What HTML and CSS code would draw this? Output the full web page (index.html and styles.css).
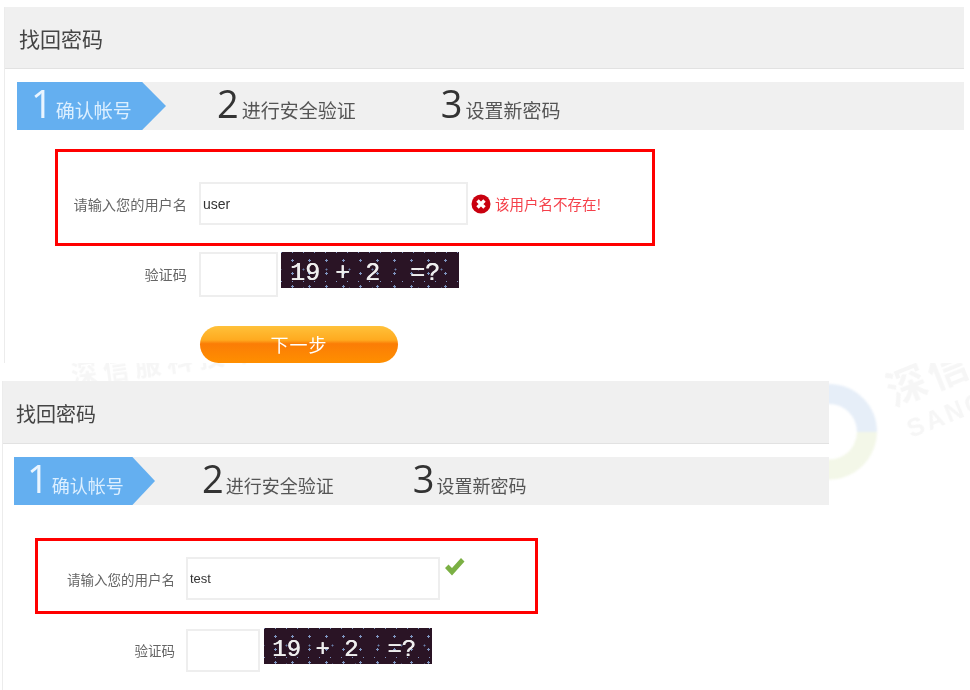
FILE: index.html
```html
<!DOCTYPE html>
<html lang="zh-CN">
<head>
    <meta charset="UTF-8">
    <title>找回密码</title>
    <link rel="stylesheet" href="styles.css">
</head>
<body>
    <!-- faint watermark behind the two pasted shots -->
    <div class="mark mark-top">深信服科技中心</div>
    <svg class="mark-logo" width="100" height="100" viewBox="0 0 100 100">
        <path d="M12 50a38 38 0 0 1 76 0" fill="none" stroke="#e6eef8" stroke-width="20"/>
        <path d="M88 50a38 38 0 0 1-54 34" fill="none" stroke="#f3f7e8" stroke-width="20"/>
    </svg>
    <div class="mark mark-cn">深信</div>
    <div class="mark mark-en">SANG</div>

    <div class="panel panel-a">
        <div class="panel-head">找回密码</div>
        <div class="steps">
            <div class="step step-on"><span class="num">1</span><span>确认帐号</span></div>
            <div class="step step-two"><span class="num">2</span><span>进行安全验证</span></div>
            <div class="step"><span class="num">3</span><span>设置新密码</span></div>
        </div>
        <div class="redbox">
            <div class="row">
                <label class="label">请输入您的用户名</label>
                <div class="input input-wide">user</div>
                <svg class="icon-err" width="20" height="20" viewBox="0 0 20 20">
                    <circle cx="10" cy="10" r="9.5" fill="#c9000f"/>
                    <path d="M6.5 6.5l7 7M13.5 6.5l-7 7" stroke="#fff" stroke-width="3.4"/>
                </svg>
                <span class="err">该用户名不存在!</span>
            </div>
        </div>
        <div class="row row-code">
            <label class="label">验证码</label>
            <div class="input input-code"></div>
            <div class="captcha">19 + 2&nbsp; =?</div>
        </div>
        <div class="btn">下一步</div>
    </div>

    <div class="panel panel-b">
        <div class="panel-head">找回密码</div>
        <div class="steps">
            <div class="step step-on"><span class="num">1</span><span>确认帐号</span></div>
            <div class="step step-two"><span class="num">2</span><span>进行安全验证</span></div>
            <div class="step"><span class="num">3</span><span>设置新密码</span></div>
        </div>
        <div class="redbox">
            <div class="row">
                <label class="label">请输入您的用户名</label>
                <div class="input input-wide">test</div>
                <svg class="icon-ok" width="21" height="20" viewBox="0 0 21 20">
                    <path d="M1 11l3.500-3.500 3.500 3.500L17 1l3.500 3.500L8 18.500z" fill="#7bb044"/>
                </svg>
            </div>
        </div>
        <div class="row row-code">
            <label class="label">验证码</label>
            <div class="input input-code"></div>
            <div class="captcha">19 + 2&nbsp; =?</div>
        </div>
    </div>
</body>
</html>
```

FILE: styles.css
```css
* {
    margin: 0;
    padding: 0;
    box-sizing: border-box;
}

body {
    position: relative;
    height: 690px;
    overflow: hidden;
    background: #fff;
    font-family: "Noto Sans CJK SC", "Liberation Sans", sans-serif;
    color: #555;
}

/* watermark */
.mark {
    position: absolute;
    font-weight: 700;
    color: #f6f6f6;
    white-space: nowrap;
    transform: rotate(-22deg);
    filter: blur(0.6px);
}

.mark-top {
    left: 70px;
    top: 340px;
    font-size: 26px;
    letter-spacing: 6px;
    transform: rotate(-8deg);
}

.mark-cn {
    left: 884px;
    top: 345px;
    font-size: 40px;
    letter-spacing: 4px;
}

.mark-en {
    left: 905px;
    top: 400px;
    font-size: 25px;
    letter-spacing: 3px;
    font-family: "Liberation Sans", sans-serif;
}

.mark-logo {
    position: absolute;
    left: 779px;
    top: 382px;
    filter: blur(1px);
}

/* panels */
.panel {
    position: relative;
    overflow: hidden;
    border-left: 1px solid #ececec;
    background: #fff;
    filter: blur(0.6px);
}

.panel-a {
    width: 960px;
    height: 356px;
    margin: 7px 0 0 4px;
}

.panel-b {
    width: 827px;
    height: 309px;
    margin: 18px 0 0 2px;
}

.panel-head {
    display: flex;
    align-items: center;
    height: 62px;
    background: #f0f0f0;
    border-bottom: 1px solid #e2e2e2;
    color: #444;
}

.panel-a .panel-head {
    padding-left: 14px;
    font-size: 21px;
}

.panel-b .panel-head {
    height: 63px;
    padding: 2px 0 0 13px;
    font-size: 20px;
}

/* steps */
.steps {
    display: flex;
    height: 48px;
    margin-top: 13px;
    background: #f0f0f0;
    color: #555;
}

.panel-a .steps {
    margin-left: 12px;
    font-size: 19px;
}

.panel-b .steps {
    margin-left: 11px;
    font-size: 18px;
}

.step {
    display: flex;
    align-items: baseline;
    line-height: 42px;
}

.step-on {
    color: #dcefff;
    background: #64aff0;
    clip-path: polygon(0 0, 84% 0, 100% 50%, 84% 100%, 0 100%);
}

.panel-a .step-on {
    width: 149px;
    padding-left: 14px;
}

.panel-b .step-on {
    width: 141px;
    padding-left: 13px;
}

.panel-a .step-two {
    margin: 0 85px 0 51px;
}

.panel-b .step-two {
    margin: 0 79px 0 47px;
}

.num {
    font-family: "Open Sans", sans-serif;
    font-size: 38px;
    color: #333;
}

.panel-a .num {
    margin-right: 3px;
}

.panel-b .num {
    margin-right: 2px;
}

.step-on .num {
    color: #eaf5ff;
    margin-right: 3px;
}

/* form */
.redbox {
    border: 3px solid #ff0000;
}

.panel-a .redbox {
    width: 600px;
    height: 97px;
    margin: 19px 0 0 50px;
    padding-top: 30px;
}

.panel-b .redbox {
    width: 503px;
    height: 76px;
    margin: 33px 0 0 32px;
    padding-top: 16px;
}

.row {
    display: flex;
    align-items: center;
}

.label {
    text-align: right;
    color: #666;
}

.input {
    display: flex;
    align-items: center;
    height: 43px;
    padding-left: 2px;
    border: 2px solid #eee;
    background: #fff;
    color: #333;
    font-family: "Liberation Sans", sans-serif;
}

.panel-a .label {
    width: 129px;
    margin-right: 12px;
    font-size: 14.2px;
}

.panel-b .label {
    width: 137px;
    margin-right: 11px;
    font-size: 13.5px;
}

.panel-a .input {
    font-size: 14px;
}

.panel-b .input {
    font-size: 13px;
}

.panel-a .input-wide {
    width: 269px;
}

.panel-b .input-wide {
    width: 254px;
}

.icon-err {
    flex: none;
    margin-left: 3px;
}

.err {
    margin-left: 4px;
    font-size: 14.5px;
    color: #f5404a;
}

.icon-ok {
    flex: none;
    margin: -24px 0 0 4px;
}

.row-code {
    align-items: flex-start;
}

.panel-a .row-code {
    margin: 6px 0 0 50px;
}

.panel-a .row-code .label {
    width: 132px;
    line-height: 45px;
}

.panel-a .input-code {
    width: 79px;
    height: 45px;
}

.panel-b .row-code {
    margin: 15px 0 0 32px;
}

.panel-b .row-code .label {
    width: 140px;
    line-height: 43px;
}

.panel-b .input-code {
    width: 74px;
}

.captcha {
    height: 36px;
    line-height: 44px;
    padding-left: 9px;
    overflow: hidden;
    font-family: "Liberation Mono", monospace;
    font-size: 25px;
    white-space: nowrap;
    color: #eee;
    text-shadow: 0.5px 0 0 #eee;
    background-color: #2a1425;
    background-image:
        radial-gradient(circle, #7f95c0 1px, transparent 1.2px),
        radial-gradient(circle, #6a80aa 0.9px, transparent 1.1px),
        radial-gradient(circle, #7f95c0 0.8px, transparent 1px);
    background-size: 17px 13px, 23px 19px, 11px 29px;
    background-position: 3px 2px, 11px 8px, 6px 15px;
}

.panel-a .captcha {
    width: 178px;
    margin-left: 3px;
}

.panel-b .captcha {
    width: 168px;
    margin: -1px 0 0 4px;
    padding-left: 8px;
    font-size: 24px;
}

.btn {
    width: 198px;
    height: 37px;
    margin: 29px 0 0 195px;
    border-radius: 19px;
    text-align: center;
    line-height: 37px;
    font-size: 18px;
    letter-spacing: 1px;
    color: #fff;
    background: linear-gradient(#ffc13a 0, #ffaa1f 38%, #fb7d06 48%, #ff8f00 100%);
}
```
